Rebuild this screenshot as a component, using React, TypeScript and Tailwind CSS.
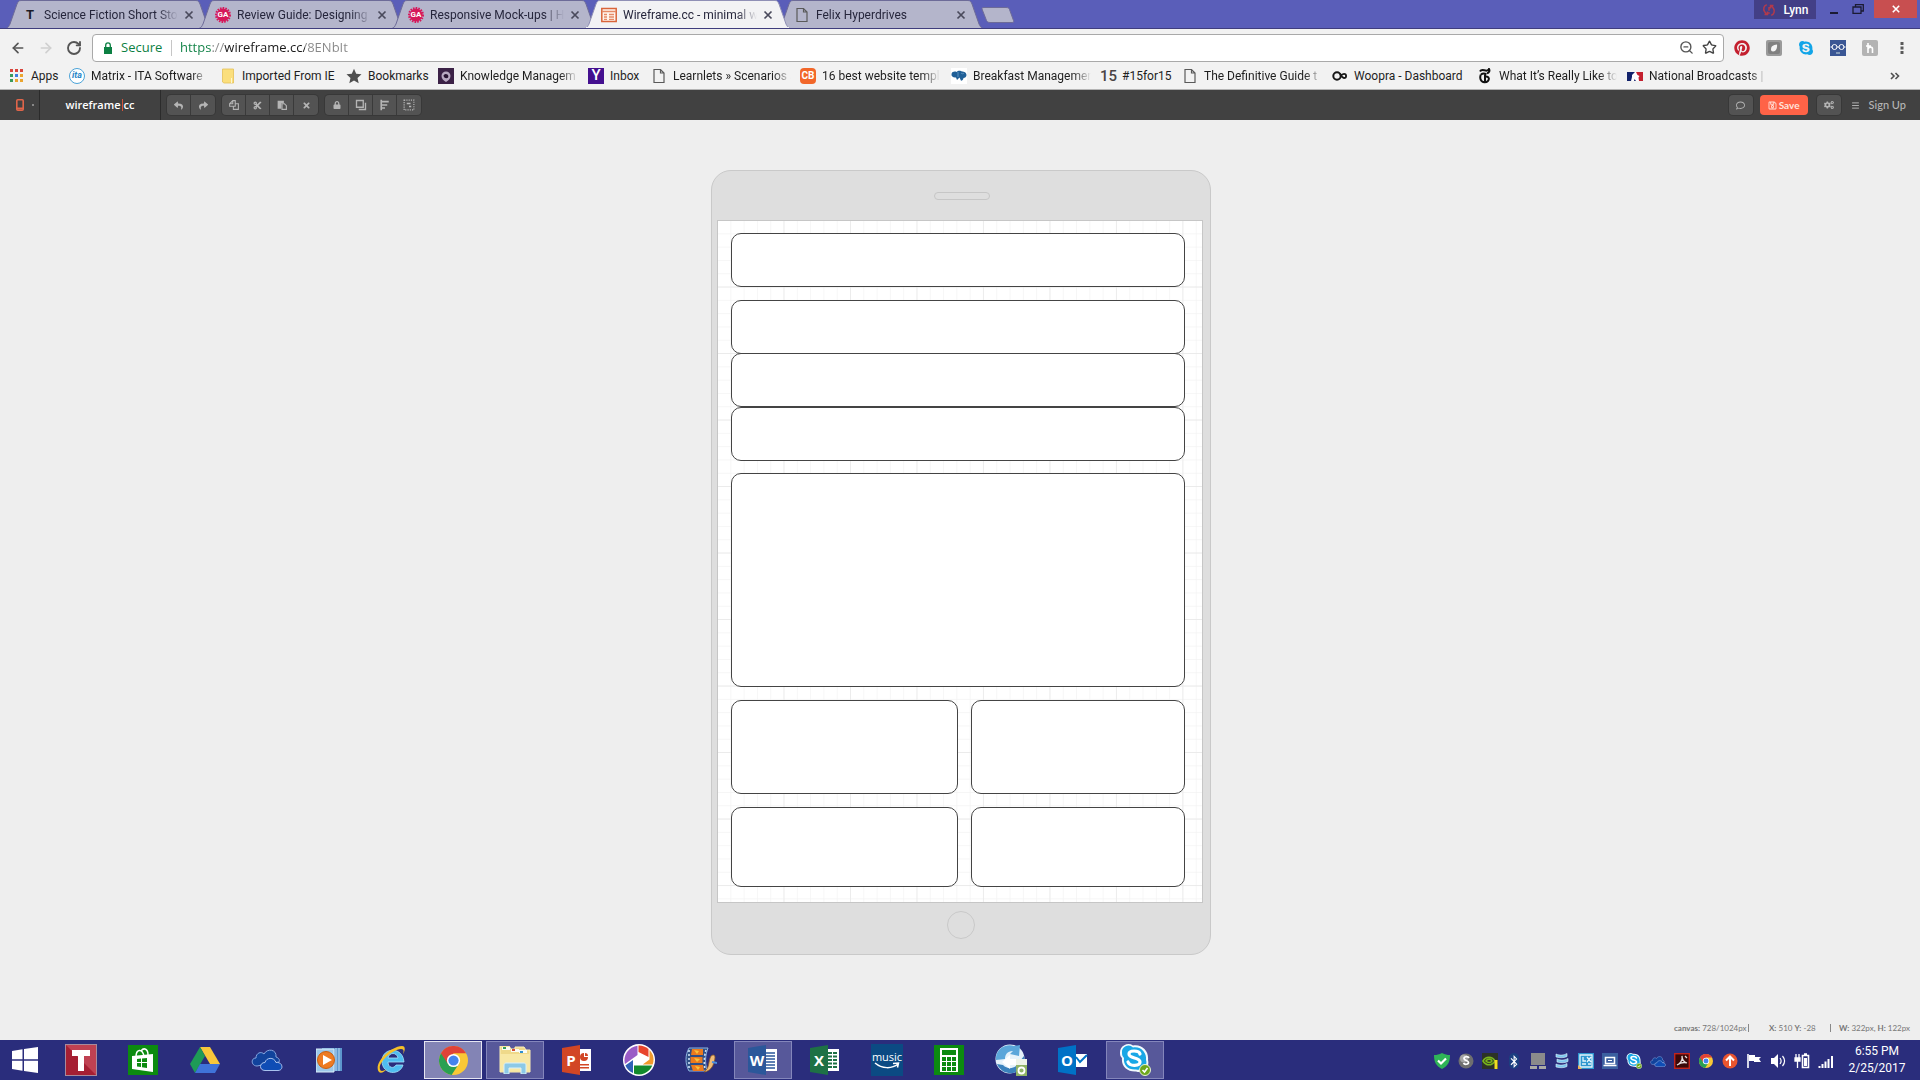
import React from "react";
import { ZoomOut, Star, ArrowLeft, ArrowRight, RotateCw, Menu } from "lucide-react";
import {
  FaReply, FaShare, FaCut, FaTimes, FaLock, FaCogs, FaRegComment, FaRegSave, FaBluetoothB, FaPinterest, FaSkype,
} from "react-icons/fa";

type Kids = { children: React.ReactNode };

function Svg({ children, box = "0 0 16 16", className = "size-4" }: Kids & { box?: string; className?: string }) {
  return (
    <svg viewBox={box} className={`shrink-0 ${className}`} aria-hidden="true">
      {children}
    </svg>
  );
}

/* ---------- favicons ---------- */

const PageIcon = () => (
  <Svg>
    <path d="M3 1.500h6.500L13 5v9.500H3zM9.500 1.500V5H13" fill="none" stroke="#5a5a5a" strokeWidth="1.200" />
  </Svg>
);
const LetterT = () => <span className="w-4 shrink-0 text-center text-[13px] font-bold leading-4 text-[#1c1c28]">T</span>;
const GaIcon = () => (
  <span className="relative flex size-4 shrink-0 items-center justify-center text-[8px] font-bold leading-none text-white">
    <svg viewBox="0 0 16 16" className="absolute inset-0 size-full" aria-hidden="true">
      <circle cx="8" cy="8" r="6.500" fill="#d6185a" />
      <circle cx="8" cy="8" r="7" fill="none" stroke="#d6185a" strokeWidth="2" strokeDasharray="1.600 1.100" />
    </svg>
    <span className="relative">GA</span>
  </span>
);
const WireIcon = () => (
  <Svg>
    <path d="M.8 1.500h14.400v13H.8z" fill="#fff4ee" stroke="#d9643a" strokeWidth="1.500" />
    <path d="M1 4.500h14M3 7.500h3M8 7.500h5M3 10h3M8 10h5M3 12.300h3M8 12.300h5" stroke="#e58a68" strokeWidth="1.300" />
  </Svg>
);
const AppsIcon = () => (
  <Svg>
    {["#d8453c", "#d8453c", "#d8453c", "#3a9a5b", "#3f7de0", "#eba52f", "#3a9a5b", "#eba52f", "#eba52f"].map((c, i) => (
      <rect key={i} x={1 + (i % 3) * 5} y={1 + Math.floor(i / 3) * 5} width="3" height="3" fill={c} />
    ))}
  </Svg>
);
const ItaIcon = () => (
  <span className="flex size-4 shrink-0 items-center justify-center rounded-full border border-[#4ba3d8] bg-white text-[9px] font-bold italic leading-none text-[#2a86c8]">
    ita
  </span>
);
const FolderIcon = () => (
  <Svg>
    <path d="M2.500 1h11v14H4l-1.500-1z" fill="#fbdf7c" stroke="#e4c058" strokeWidth=".8" />
    <path d="M11.500 10v5" stroke="#fff6cf" />
  </Svg>
);
const StarIcon = () => (
  <Svg>
    <path d="M8 .8l2.200 4.900 5.300.6-4 3.600 1.200 5.300L8 12.500l-4.700 2.700 1.200-5.300-4-3.600 5.300-.6z" fill="#4f4f4f" />
  </Svg>
);
const KmIcon = () => (
  <Svg>
    <rect width="16" height="16" fill="#3b2146" />
    <path d="M3.500 8a4.500 4.500 0 1 1 9 0c0 2.500-2 4.500-4.500 6-2.500-1.500-4.500-3.500-4.500-6z" fill="#b9a9c2" />
    <path d="M5.500 7.500a2.500 2.500 0 1 1 4.500 2.200C8 11 5.500 9.500 5.500 7.500z" fill="#2a1433" />
  </Svg>
);
const YahooIcon = () => (
  <span className="flex size-4 shrink-0 items-center justify-center bg-[#44108f] text-[15px] font-medium leading-none text-white">Y</span>
);
const CbIcon = () => (
  <span className="flex size-4 shrink-0 items-center justify-center rounded-sm bg-[#f2672a] text-[10px] font-bold leading-none text-white">CB</span>
);
const BrainIcon = () => (
  <Svg>
    <rect width="16" height="16" fill="#fff" />
    <path d="M.5 6C1 3.500 4 3 5.500 4 7 2 10 2.500 11 3.500c2 0 4.500 1 4.500 3.500 0 2-1.500 2.800-3 3-.5 2-1 2.500-2.500 2.800L8.500 9.500 6 12 5 9.500C2.500 10 0 8.500.5 6z" fill="#1f5f97" />
    <path d="M7 4v5M10 5c1 1 2 1 3 0" stroke="#5b93c0" fill="none" />
  </Svg>
);
const FifteenIcon = () => <span className="w-4 shrink-0 text-center text-[15px] font-medium leading-4 text-[#4a4444]">15</span>;
const WoopraIcon = () => (
  <Svg>
    <circle cx="5" cy="8" r="3.700" fill="none" stroke="#161616" strokeWidth="2" />
    <path d="M8 5.500c1 2 2 4.500 4 4.500a2 2 0 1 0 0-4.200c-1.700 0-2.500 1.200-3.300 2.700" fill="none" stroke="#161616" strokeWidth="1.800" />
  </Svg>
);
const NytIcon = () => (
  <Svg>
    <path d="M3 3.500C4.500.5 7.500 3 10 2.600c1.200-.2 1.800-.8 2-1.600 1 1.800.2 3.700-2 4.200M4 6.500c2-1.500 3.500-1 5.500-.5M3.800 6.500C2.500 10 3.500 14 7.500 14.200c3 .1 4.700-2 4.300-4-.4-1.700-2.500-2-3.800-1M8 5v9" fill="none" stroke="#111" strokeWidth="2" />
  </Svg>
);
const MlbIcon = () => (
  <Svg>
    <rect y="4" width="16" height="9" fill="#fff" />
    <path d="M0 4h8L5 7v2l-1 4H0z" fill="#12226b" />
    <path d="M9 4h7v9h-4l-.5-3.500 1-1.500L10.500 7z" fill="#c4202f" />
    <path d="M7 13l.5-2 1.500 2z" fill="#12226b" />
  </Svg>
);

/* ---------- browser chrome ---------- */

const tabs = [
  { title: "Science Fiction Short Sto", icon: <LetterT /> },
  { title: "Review Guide: Designing", icon: <GaIcon /> },
  { title: "Responsive Mock-ups | H", icon: <GaIcon /> },
  { title: "Wireframe.cc - minimal w", icon: <WireIcon />, active: true },
  { title: "Felix Hyperdrives", icon: <PageIcon /> },
];

const fade = "overflow-hidden whitespace-nowrap [mask-image:linear-gradient(to_right,#000_85%,transparent)]";

function TabStrip() {
  return (
    <header className="flex h-7 items-start justify-between bg-[#5a5eb9] font-['Roboto',sans-serif]">
      <div role="tablist" className="flex pl-1.5">
        {tabs.map((t) => (
          <div key={t.title} className={`relative -mr-3 h-7 w-[205px] ${t.active ? "z-10" : ""}`}>
            <svg viewBox="0 0 205 28" preserveAspectRatio="none" className="absolute inset-0 size-full" aria-hidden="true">
              <path d="M0 28.500C2 28 3 26 4 24L11 4c1-2 1.500-3.500 4-3.500h175c2.500 0 3 1.500 4 3.500l7 20c1 2 2 4 4 4.500z" fill={t.active ? "#f2f2f4" : "#b4b5cb"} stroke={t.active ? "#8f8fb5" : "#6d6b98"} />
              {t.active && <path d="M1 28h203" stroke="#f2f2f4" strokeWidth="2" />}
            </svg>
            <div className="relative flex h-7 items-center pl-4 pt-0.5">
              {t.icon}
              <button role="tab" aria-selected={!!t.active} className={`ml-1.5 w-[134px] text-left text-[12px] leading-4 text-[#26263c] ${fade}`}>
                {t.title}
              </button>
              <button aria-label="Close tab" className="ml-1.5">
                <Svg box="0 0 10 10" className="size-2.5">
                  <path d="M1.500 1.500l7 7m0-7l-7 7" stroke="#4a4a5c" strokeWidth="1.700" />
                </Svg>
              </button>
            </div>
          </div>
        ))}
        <button aria-label="New tab" className="ml-2.5 mt-[7px] self-start">
          <Svg box="0 0 34 16" className="h-4 w-[34px]">
            <path d="M3 .5h22c2 0 3 .5 3.500 2l4 11c.5 1.500 0 2-1.500 2H9c-2 0-3-1-3.500-2L1 2C.7 1 1.500.5 3 .5z" fill="#b4b5cb" stroke="#6d6b98" />
          </Svg>
        </button>
      </div>
      <div className="flex items-start pr-[3px]">
        <button className="flex h-[19px] w-[62px] items-center justify-center gap-2 bg-[#433f86] text-[12px] font-medium leading-none text-white">
          <Svg className="h-3 w-3.5">
            <path d="M5 1C1 2 0 7 2 10l3 4M2 14h4v-4M11 15c4-1 5-6 3-9l-3-4M14 2h-4v4M8 4v5M8 11v2" stroke="#b23a4b" strokeWidth="2" fill="none" />
          </Svg>
          Lynn
        </button>
        <button aria-label="Minimize" className="flex h-[18px] w-9 items-center justify-center pt-2">
          <span className="h-0.5 w-2 bg-[#1b1b33]" />
        </button>
        <button aria-label="Restore" className="flex h-[18px] w-[22px] items-center">
          <Svg box="0 0 12 10" className="h-2.5 w-3">
            <path d="M1 3h8v6.500H1zM3.500 3V.7h7.800V7H9" fill="none" stroke="#1b1b33" strokeWidth="1.300" />
          </Svg>
        </button>
        <button aria-label="Close window" className="flex h-[18px] w-[43px] items-center justify-center bg-[#c84f50]">
          <Svg box="0 0 10 10" className="size-2">
            <path d="M1 1l8 8M9 1L1 9" stroke="#fff" strokeWidth="2" />
          </Svg>
        </button>
      </div>
    </header>
  );
}

function AddressBar() {
  return (
    <div className="flex h-[34px] items-center border-t border-[#3f3d7d] bg-[#f2f2f2] pr-2.5 pt-1">
      <div className="flex w-[92px] items-center gap-3 pl-2.5">
        <button aria-label="Back"><ArrowLeft size={16} strokeWidth={2.500} color="#555" /></button>
        <button aria-label="Forward"><ArrowRight size={16} strokeWidth={2.500} color="#d0d0d0" /></button>
        <button aria-label="Reload"><RotateCw size={16} strokeWidth={2.800} color="#555" /></button>
      </div>
      <form className="flex h-7 flex-1 items-center rounded-sm border border-[#a9a9a9] bg-white pl-2.5 pr-1.5">
        <Svg box="0 0 10 12" className="h-3 w-2.5">
          <path d="M1 5h8v7H1z" fill="#0c8043" />
          <path d="M2.700 5V3.200a2.300 2.300 0 0 1 4.600 0V5" fill="none" stroke="#0c8043" strokeWidth="1.300" />
        </Svg>
        <label htmlFor="url" className="ml-2 w-[50px] text-[13px] text-[#0c8043]">Secure</label>
        <span className="mr-2 h-4 w-px bg-[#c6c6c6]" />
        <input
          id="url"
          defaultValue="https://wireframe.cc/8ENbIt"
          className="min-w-0 flex-1 bg-[linear-gradient(to_right,#0c8043_0,#0c8043_32px,#888_32px,#888_44px,#1a1a1a_44px,#1a1a1a_125px,#888_125px)] bg-clip-text text-[13px] text-transparent outline-none"
        />
        <button type="button" aria-label="Zoom out"><ZoomOut size={15} color="#555" strokeWidth={2.200} /></button>
        <button type="button" aria-label="Bookmark" className="ml-2"><Star size={15} color="#444" strokeWidth={2.200} /></button>
      </form>
      <div className="ml-2.5 flex items-center gap-4">
        <button aria-label="Pinterest"><FaPinterest size={16} color="#c4202f" /></button>
        <button aria-label="Evernote">
          <Svg>
            <rect width="16" height="16" rx="2" fill="#9a9a9a" />
            <rect x="2" y="2" width="12" height="12" rx="2" fill="#808080" />
            <path d="M5 9.500C5 6 7 5 11 4.500c.5 3.500-1 7-4 7-1.300 0-2-.7-2-2z" fill="#f4f4f4" />
          </Svg>
        </button>
        <button aria-label="Skype"><FaSkype size={16} color="#12a5e8" /></button>
        <button aria-label="Glasses">
          <Svg>
            <rect width="16" height="16" fill="#3a5694" />
            <path d="M.5 7h2M13.500 7h2M7 7h2" stroke="#fff" />
            <circle cx="4.500" cy="7" r="2.500" fill="none" stroke="#fff" />
            <circle cx="11.500" cy="7" r="2.500" fill="none" stroke="#fff" />
            <path d="M6 13h4" stroke="#cdd" />
          </Svg>
        </button>
        <button aria-label="Honey">
          <Svg>
            <rect width="16" height="16" rx="2" fill="#b3b3b3" />
            <path d="M6 3v10M4 6h5M6 9c1-2.500 4.500-2.500 4.500 0V13" fill="none" stroke="#fff" strokeWidth="1.600" />
          </Svg>
        </button>
        <button aria-label="Browser menu">
          <Svg>
            <path d="M6.500 2h3v3h-3zM6.500 6.500h3v3h-3zM6.500 11h3v3h-3z" fill="#5a5a5a" />
          </Svg>
        </button>
      </div>
    </div>
  );
}

const bookmarks = [
  { text: "Apps", icon: <AppsIcon />, w: "w-[60px]" },
  { text: "Matrix - ITA Software", icon: <ItaIcon />, w: "w-[151px]", cut: true },
  { text: "Imported From IE", icon: <FolderIcon />, w: "w-[126px]" },
  { text: "Bookmarks", icon: <StarIcon />, w: "w-[92px]" },
  { text: "Knowledge Managem", icon: <KmIcon />, w: "w-[150px]", cut: true },
  { text: "Inbox", icon: <YahooIcon />, w: "w-[63px]" },
  { text: "Learnlets » Scenarios a", icon: <PageIcon />, w: "w-[149px]", cut: true },
  { text: "16 best website templ", icon: <CbIcon />, w: "w-[151px]", cut: true },
  { text: "Breakfast Managemen", icon: <BrainIcon />, w: "w-[149px]", cut: true },
  { text: "#15for15", icon: <FifteenIcon />, w: "w-[82px]" },
  { text: "The Definitive Guide t", icon: <PageIcon />, w: "w-[150px]", cut: true },
  { text: "Woopra - Dashboard", icon: <WoopraIcon />, w: "w-[145px]" },
  { text: "What It’s Really Like to", icon: <NytIcon />, w: "w-[150px]", cut: true },
  { text: "National Broadcasts |", icon: <MlbIcon />, w: "w-[150px]", cut: true },
];

function BookmarksBar() {
  return (
    <nav className="flex h-7 items-center border-b border-[#b4b4b4] bg-[#f2f2f2] pl-[9px] pr-5 font-['Roboto',sans-serif] text-[12px] text-[#1e1e1e]">
      {bookmarks.map((b) => (
        <a key={b.text} href="#" className={`flex items-center gap-1.5 leading-4 ${b.w}`}>
          {b.icon}
          <span className={b.cut ? `w-[118px] ${fade}` : "whitespace-nowrap"}>{b.text}</span>
        </a>
      ))}
      <button aria-label="More bookmarks" className="ml-auto">
        <Svg box="0 0 10 8" className="h-2 w-2.5">
          <path d="M1 1l3 3-3 3M5.500 1l3 3-3 3" fill="none" stroke="#505050" strokeWidth="1.600" />
        </Svg>
      </button>
    </nav>
  );
}

/* ---------- editor toolbar ---------- */

const CopyIcon = () => (
  <Svg className="size-2.5"><path d="M6 1h4v9H1V6zM6 1v5H1M10 6h5v9H7v-5" fill="none" stroke="#b5b5b5" strokeWidth="1.700" /></Svg>
);
const PasteIcon = () => (
  <Svg className="size-2.5">
    <path d="M1 1h10v4H7v9H1z" fill="#b5b5b5" />
    <path d="M8 6h4l3 3v6H8z" fill="none" stroke="#b5b5b5" strokeWidth="1.800" />
  </Svg>
);
const LayersIcon = () => (
  <Svg className="size-3"><path d="M2 2h9v9H2zM5 14h9V5" fill="none" stroke="#b5b5b5" strokeWidth="1.800" /></Svg>
);
const AlignIcon = () => (
  <Svg className="size-3"><path d="M3 1v14M3 3.500h10M3 8h8M3 12h5" fill="none" stroke="#b5b5b5" strokeWidth="2.200" /></Svg>
);
const SelectIcon = () => (
  <Svg className="size-3">
    <path d="M1.500 1.500h13v13h-13z" fill="none" stroke="#b5b5b5" strokeWidth="1.600" strokeDasharray="1.500 1.500" />
    <path d="M5 6h5M8 10h3" stroke="#b5b5b5" strokeWidth="2" fill="none" />
  </Svg>
);

const groups = [
  [["Undo", <FaReply size={9} />], ["Redo", <FaShare size={9} />]],
  [["Copy", <CopyIcon />], ["Cut", <FaCut size={9} />], ["Paste", <PasteIcon />], ["Delete", <FaTimes size={9} />]],
  [["Lock", <FaLock size={8} />], ["Arrange", <LayersIcon />], ["Align", <AlignIcon />], ["Select", <SelectIcon />]],
] as [string, React.ReactNode][][];

function EditorBar() {
  return (
    <div className="flex h-[30px] items-stretch bg-[#414141] font-['Lato',sans-serif] text-[#b5b5b5]">
      <button aria-label="Device" className="flex w-10 items-center gap-2 border-r border-[#2b2b2b] pl-4">
        <Svg box="0 0 8 12" className="h-3 w-2">
          <rect x=".8" y=".8" width="6.400" height="10.400" rx="1" fill="none" stroke="#e0654a" strokeWidth="1.600" />
          <path d="M1 9.500h6" stroke="#e0654a" strokeWidth="2" />
        </Svg>
        <span className="size-0.5 bg-[#888]" />
      </button>
      <a href="#" className="flex w-[121px] items-center justify-center border-r border-[#2b2b2b] font-['Open_Sans',sans-serif] text-[11px] font-semibold text-white">
        wireframe<span className="mx-px h-3 w-px bg-[#d4543c]" />cc
      </a>
      <div className="flex items-center gap-[7px] pl-1.5">
        {groups.map((g, i) => (
          <div key={i} className="flex h-5 divide-x divide-[#3a3a3a] rounded-sm bg-[#535353] ring-1 ring-[#383838]">
            {g.map(([label, icon]) => (
              <button key={label} aria-label={label} className="flex w-6 items-center justify-center">{icon}</button>
            ))}
          </div>
        ))}
      </div>
      <div className="ml-auto flex items-center pr-3.5">
        <button aria-label="Comments" className="flex h-5 w-6 items-center justify-center rounded-sm bg-[#535353] ring-1 ring-[#383838]"><FaRegComment size={9} /></button>
        <button className="ml-[7px] flex h-5 w-12 items-center justify-center gap-0.5 rounded-sm bg-[#ff6347] text-[10px] font-bold text-[#ffe3dc]"><FaRegSave size={9} />Save</button>
        <button aria-label="Settings" className="ml-[9px] flex h-5 w-6 items-center justify-center rounded-sm bg-[#535353] ring-1 ring-[#383838]"><FaCogs size={10} /></button>
        <button aria-label="Menu" className="ml-2.5"><Menu size={9} strokeWidth={2.500} /></button>
        <a href="#" className="ml-[9px] text-[11px] font-medium">Sign Up</a>
      </div>
    </div>
  );
}

/* ---------- canvas ---------- */

function Grid() {
  return (
    <svg viewBox="0 0 728 1024" preserveAspectRatio="none" className="absolute inset-0 size-full" aria-hidden="true">
      <defs>
        <pattern id="minor" width="20" height="20" patternUnits="userSpaceOnUse">
          <path d="M20 0v20H0" fill="none" stroke="#f3f3f3" strokeWidth="2" />
        </pattern>
        <pattern id="major" width="100" height="100" patternUnits="userSpaceOnUse">
          <path d="M100 0v100H0" fill="none" stroke="#e8e8e8" strokeWidth="2" />
        </pattern>
      </defs>
      <rect width="728" height="1024" fill="url(#minor)" />
      <rect width="728" height="1024" fill="url(#major)" />
    </svg>
  );
}

const box = "rounded-[10px] border border-[#444] bg-white";

function Device() {
  return (
    <div className="flex w-[500px] flex-col rounded-[20px] border border-[#c9c9c9] bg-[#dedede] px-[5px]">
      <div className="flex h-[49px] items-center justify-center pl-0.5">
        <span className="h-2 w-14 rounded-full border border-[#c6c6c6]" />
      </div>
      <div className="relative mr-0.5 border border-[#c6c6c6] bg-white pb-[15px] pl-[13px] pr-[17px] pt-3">
        <Grid />
        <div className="relative flex flex-col">
          <div className={`h-[54px] ${box}`} />
          <div className={`mt-[13px] h-[54px] ${box}`} />
          <div className={`-mt-px h-[54px] ${box}`} />
          <div className={`h-[54px] ${box}`} />
          <div className={`mt-3 h-[214px] ${box}`} />
          <div className="mt-[13px] grid grid-cols-[227fr_214fr] gap-[13px]">
            <div className={`h-[94px] ${box}`} />
            <div className={`h-[94px] ${box}`} />
            <div className={`h-20 ${box}`} />
            <div className={`h-20 ${box}`} />
          </div>
        </div>
      </div>
      <div className="flex h-[51px] items-start justify-center pt-2">
        <span className="size-7 rounded-full border border-[#c9c9c9]" />
      </div>
    </div>
  );
}

/* ---------- taskbar icons ---------- */

const StartIcon = () => (
  <Svg box="0 0 26 26" className="size-[26px]">
    <path d="M0 4l10.500-1.700v10H0zM12 2l14-2v12.300H12zM0 13.700h10.500v10L0 22zM12 13.700h14V26l-14-2z" fill="#fff" />
  </Svg>
);
const TIcon = () => (
  <Svg box="0 0 32 32" className="size-8">
    <rect x=".5" y=".5" width="31" height="31" fill="#a51f33" stroke="#a88a9c" />
    <path d="M1 1h30v30z" fill="#bf4152" />
    <path d="M7 6h18v6h-6v15h-6V12H7z" fill="#fff" />
  </Svg>
);
const StoreIcon = () => (
  <Svg box="0 0 30 30" className="size-[30px]">
    <rect width="30" height="30" fill="#0c8a10" />
    <path d="M4 11l21-2v18L4 24z" fill="#fff" />
    <path d="M8 12c0-8 6-9 8-1M13 6c3-4 7-2 7 4" fill="none" stroke="#fff" strokeWidth="1.500" />
    <path d="M9 14l4-.5V17H9zM14 13.500l5-.5v4h-5zM9 18h4v4l-4-.5zM14 18h5v5l-5-.7z" fill="#0c8a10" />
  </Svg>
);
const DriveIcon = () => (
  <Svg box="0 0 30 26" className="h-[26px] w-[30px]">
    <path d="M10 0h10l10 17H20z" fill="#f8c73a" />
    <path d="M10 0l5 9L5 26 0 17z" fill="#1e9b56" />
    <path d="M10 17h20l-5 9H5z" fill="#3f73d9" />
  </Svg>
);
const CloudIcon = ({ className }: { className: string }) => (
  <Svg box="0 0 32 22" className={className}>
    <path d="M6 17C0 17-.5 9 5 9c0-5 5-7 8-4 3-6 13-5 12 3 3 1 4 3 3 5z" fill="#11439c" stroke="#86a6e0" />
    <path d="M14 21.500c-6 0-6-8 0-8 1-5 9-6 11 0 7-1 8 8 2 8z" fill="#0f4db5" stroke="#a9c2ee" />
  </Svg>
);
const WmpIcon = () => (
  <Svg box="0 0 26 26" className="size-[26px]">
    <path d="M6 1h20v23H6z" fill="#5d97cd" />
    <path d="M20 1v23M23 1v23" stroke="#bcdcf5" />
    <path d="M0 2h18v23H0z" fill="#9cc8ea" stroke="#dbeefa" />
    <circle cx="10" cy="13" r="8.500" fill="#ee7b22" stroke="#c95f10" />
    <path d="M7 8l9 5-9 5z" fill="#fff" />
  </Svg>
);
const IeIcon = () => (
  <Svg box="0 0 30 30" className="size-[30px]">
    <path d="M27 20c-3 11-21 10-21-4C6 2 27 1 28 17H12c0 6 6 7 8 3zM12 13h10c-1-6-9-6-10 0z" fill="#4fbdf0" stroke="#a4e1fb" strokeWidth=".8" />
    <path d="M3 27C-3 20 12 2 26 1c4 0 3 5 1 8 1-3 1-5-2-5C15 5 2 18 4 24c0 3 4 2 7 0-3 3-6 5-8 3z" fill="#f5c028" />
  </Svg>
);
const ChromeIcon = ({ className }: { className: string }) => (
  <Svg box="0 0 30 30" className={className}>
    <circle cx="15" cy="15" r="15" fill="#f9c836" />
    <path d="M15 15L2 7.500A15 15 0 0 0 13 29.900L21.500 17z" fill="#2aa052" />
    <path d="M2 7.500A15 15 0 0 1 28 7.500H15L9 18z" fill="#df4237" />
    <circle cx="15" cy="15" r="6.800" fill="#fff" />
    <circle cx="15" cy="15" r="5.300" fill="#4483ee" />
  </Svg>
);
const ExplorerIcon = () => (
  <Svg box="0 0 32 28" className="h-7 w-8">
    <path d="M1 3V0h9l2 3h4V1h9l2 3h4v22H1z" fill="#efd98a" stroke="#fff0b8" />
    <path d="M3 1h8v3H3zM12 3h8v3h-8zM20 4h8v3h-8z" fill="#f9fbf5" />
    <path d="M4 1h3v2H4z" fill="#379b5a" />
    <path d="M13 3h3v2h-3z" fill="#d8502f" />
    <path d="M21 5h3v2h-3z" fill="#2f8fd0" />
    <path d="M1 8h30v17H1z" fill="#f8e8a5" />
    <path d="M5 28v-9c0-1 1-2 2-2h18c1 0 2 1 2 2v9h-5v-6H10v6z" fill="#8cc9e6" stroke="#d8f1fb" />
  </Svg>
);
function Office({ letter, color, children }: Kids & { letter: string; color: string }) {
  return (
    <span className="relative block size-[30px]">
      <Svg box="0 0 30 30" className="size-[30px]">
        <path d="M17 4h12v22H17z" fill="#fff" />
        {children}
        <path d="M0 3l18-3v30L0 27z" fill={color} />
      </Svg>
      <span className="absolute inset-y-0 left-0 flex w-[18px] items-center justify-center text-[15px] font-bold leading-none text-white">{letter}</span>
    </span>
  );
}
const PicasaIcon = () => (
  <Svg box="0 0 32 32" className="size-8">
    <circle cx="16" cy="16" r="16" fill="#fff" />
    <path d="M14.500 1.800A14.500 14.500 0 0 0 2 20L14.500 11z" fill="#9a5cc6" />
    <path d="M15.500 1.600a14.500 14.500 0 0 1 10 3.500V13L15.500 8z" fill="#e8452c" />
    <path d="M26.500 6a14.500 14.500 0 0 1 3.200 14.500h-10l6.800-5z" fill="#f09a2c" />
    <path d="M29.300 21.500A14.500 14.500 0 0 1 11 29.500v-8z" fill="#128a2c" />
    <path d="M2.400 21.500l7.600-5.500v13A14.500 14.500 0 0 1 2.400 21.500z" fill="#2f62b5" />
  </Svg>
);
const MovieIcon = () => (
  <Svg box="0 0 32 26" className="h-[26px] w-8">
    <path d="M4 1h19c-3 8-3 14-1 23H4C0 17 0 8 4 1z" fill="#2f4f86" stroke="#8fb4e0" />
    <path d="M7 2h11v6H6zM5.500 10h12v6h-12zM6 18h12l1 6H8z" fill="#ec7a1e" />
    <path d="M9 3l5 1-2 3zM9 11l6 1-3 3zM10 19l5 1-2 3z" fill="#f7c23c" />
    <path d="M4 3v20M21 3c-2 6-2 14-1 20" stroke="#cfe0f5" strokeWidth="1.600" strokeDasharray="2 2" fill="none" />
    <path d="M26 9c4-3 5 1 3 6-1 5-4 9-10 10 6-4 4-11 7-16z" fill="#f0bc78" stroke="#8f5a24" strokeWidth=".8" />
    <path d="M27 15l5 1" stroke="#4c8fe0" strokeWidth="2" fill="none" />
  </Svg>
);
const MusicIcon = () => (
  <span className="flex size-8 flex-col items-center justify-center bg-[#0b4a83] text-[11px] leading-[11px] text-white">
    music
    <Svg box="0 0 26 7" className="h-[7px] w-[26px]">
      <path d="M1 1c7 6 17 6 23 1M19 1.500l5.500-.5-1 4.500" fill="none" stroke="#fff" strokeWidth="1.500" />
    </Svg>
  </span>
);
const CalcIcon = () => (
  <Svg box="0 0 30 30" className="size-[30px]">
    <rect width="30" height="30" fill="#0c8a10" />
    <path d="M6 3h18v24H6z" fill="#fff" />
    <path d="M8 5h14v5H8z" fill="#0c8a10" />
    {[0, 1, 2].map((r) => [0, 1, 2].map((c) => <rect key={`${r}${c}`} x={8 + c * 5} y={12 + r * 5} width="4" height="4" fill="#0c8a10" />))}
  </Svg>
);
const SyncIcon = () => (
  <Svg box="0 0 32 32" className="size-8">
    <circle cx="15" cy="15" r="14.500" fill="#e6f2fa" />
    <path d="M1 16C0 5 11-1 19 2l6-1-1 11-9-2 3-3c-6 0-8 4-8 8z" fill="#5ba6da" />
    <path d="M29 12c2 8-3 16-11 17-6 1-13-2-16-9l6 1c4 4 9 4 13 1z" fill="#3b82bd" />
    <path d="M7 18l8-7v4h8v6h-8v4z" fill="#fff" />
    <path d="M21 15h11v17H21z" fill="#8fb266" />
    <path d="M21 15h11v6H21z" fill="#eef3e8" />
    <circle cx="26.500" cy="26.500" r="3" fill="none" stroke="#fff" strokeWidth="1.800" />
  </Svg>
);
const SkypeIcon = ({ className }: { className: string }) => (
  <Svg box="0 0 32 32" className={className}>
    <path d="M1 9a8.500 8.500 0 0 1 13-7.500C23 0 30 7 29 16c2 7-4 14-12 11.500C8 28 2 22 3 14 1.500 13 1 11 1 9z" fill="#f2fafe" />
    <path d="M3 9a6.500 6.500 0 0 1 11-5.500C22 2 28 9 27 16c2 5-3 11-10 9.500C9 26 4 21 5 14 3.500 12.500 3 11 3 9z" fill="#19a7e6" />
    <path d="M21 10c-1-4-11-4-11 0 0 5 11 3 11 8 0 4-10 5-12 0" fill="none" stroke="#fff" strokeWidth="3.200" strokeLinecap="round" />
    <circle cx="26" cy="26" r="5.500" fill="#6ea71d" stroke="#e3f0d0" />
    <path d="M23.500 26l2 2 3-4" stroke="#fff" strokeWidth="1.600" fill="none" />
  </Svg>
);

const apps: { name: string; icon: React.ReactNode; state?: "open" | "front" }[] = [
  { name: "T", icon: <TIcon /> },
  { name: "Store", icon: <StoreIcon /> },
  { name: "Drive", icon: <DriveIcon /> },
  { name: "OneDrive", icon: <CloudIcon className="h-[22px] w-8" /> },
  { name: "Media Player", icon: <WmpIcon /> },
  { name: "Internet Explorer", icon: <IeIcon /> },
  { name: "Chrome", icon: <ChromeIcon className="size-[29px]" />, state: "front" },
  { name: "File Explorer", icon: <ExplorerIcon />, state: "open" },
  {
    name: "PowerPoint",
    icon: (
      <Office letter="P" color="#d24625">
        <circle cx="22" cy="12" r="4" fill="#d24625" />
        <path d="M22 12V7h5v5z" fill="#fff" />
        <path d="M23 11V8a3 3 0 0 1 3 3zM18 19h9v1.500h-9zM18 22h9v1.500h-9z" fill="#d24625" />
      </Office>
    ),
  },
  { name: "Picasa", icon: <PicasaIcon /> },
  { name: "Movie Maker", icon: <MovieIcon /> },
  {
    name: "Word",
    icon: (
      <Office letter="W" color="#2b579a">
        <path d="M18 8h9M18 11h9M18 14h9M18 17h9M18 20h9M18 23h9" stroke="#2b579a" strokeWidth="1.300" />
      </Office>
    ),
    state: "open",
  },
  {
    name: "Excel",
    icon: (
      <Office letter="X" color="#1e7145">
        <path d="M18 8h9M18 11.500h9M18 15h9M18 18.500h9M18 22h9" stroke="#1e7145" strokeWidth="2" />
        <path d="M22.500 6v18" stroke="#fff" />
      </Office>
    ),
  },
  { name: "Amazon Music", icon: <MusicIcon /> },
  { name: "Calculator", icon: <CalcIcon /> },
  { name: "Sync", icon: <SyncIcon /> },
  {
    name: "Outlook",
    icon: (
      <Office letter="O" color="#0072c6">
        <path d="M17 4h12v5H17zM17 22h12v4H17z" fill="#2a2d7c" />
        <path d="M18 12l4 5 7-7" stroke="#0072c6" strokeWidth="2" fill="none" />
      </Office>
    ),
  },
  { name: "Skype", icon: <SkypeIcon className="size-8" />, state: "open" },
];

const tray: [string, React.ReactNode][] = [
  ["Security", <Svg><path d="M0 2c3 0 5-.5 8-2 3 1.500 5 2 8 2 0 7-2 11-8 14C2 13 0 9 0 2z" fill="#2fb457" /><path d="M4 7.500l3 3 5-5" stroke="#fff" strokeWidth="2.200" fill="none" /></Svg>],
  ["Sound manager", <Svg><circle cx="8" cy="8" r="7.500" fill="#6f6f6f" /><circle cx="6" cy="5.500" r="4" fill="#a5a5a5" /><path d="M11 5c-1-2-5-1.500-5 .5 0 2.500 4.500 1.500 4.500 4 0 2-4 2.500-5 .5" stroke="#fff" strokeWidth="1.700" fill="none" /></Svg>],
  ["Graphics", <Svg><rect width="16" height="16" fill="#2c3327" /><path d="M1 8c3-5 9-5 12 0-3 5-9 5-12 0zM4 8c1.500-2.500 5-2.500 6 0-1 2-4.500 2-6 0z" fill="none" stroke="#79b51c" strokeWidth="1.600" /><path d="M12.500 7h3v9h-3z" fill="#f3dd23" /></Svg>],
  ["Bluetooth", <span className="flex h-4 w-2.5 items-center justify-center rounded-full bg-[#1c3f80]"><FaBluetoothB size={13} color="#fff" /></span>],
  ["Display", <Svg><path d="M1 0h14v12H1z" fill="#8b8b8b" /><path d="M0 13h7v3H0zM9 13h7v3H9z" fill="#aaaaa5" /></Svg>],
  ["Database", <Svg><path d="M2 1c4 2 8 1 11-.5v3C10 5 6 5 2 4zM3 6c4 2 8 1 11-.5v3C11 10 7 10 3 9zM2 11c4 2 8 1 11-.5v3C10 15 6 15 2 14z" fill="#7cc7ee" stroke="#e3f4fc" strokeWidth=".6" /></Svg>],
  ["Display driver", <Svg><rect width="16" height="16" fill="#2e96cf" /><path d="M2 2h12v12H2zM5 4v4h3M9 4l4 5M13 4L9 9M4 11h4M10 11h3" fill="none" stroke="#e4f5fc" strokeWidth="1.300" /><path d="M0 12l4 4H0z" fill="#f0b054" /></Svg>],
  ["Laptop", <Svg><rect width="16" height="16" fill="#3c60a0" /><path d="M3.500 4.500h9v6h-9zM1.500 12.500h13" fill="none" stroke="#fff" strokeWidth="1.500" /><path d="M6 7.500h4" stroke="#fff" /></Svg>],
  ["Skype status", <SkypeIcon className="size-4" />],
  ["OneDrive status", <CloudIcon className="h-[11px] w-4" />],
  ["Updater", <Svg><rect x=".7" y=".7" width="14.600" height="14.600" fill="#3a0909" stroke="#c2241d" strokeWidth="1.400" /><path d="M3 12c3-1 6-5 5-9 0 4 2 6 5 7-3-1-7 0-10 2zM11 3l2 2" fill="none" stroke="#e9dede" strokeWidth="1.300" /></Svg>],
  ["Chrome apps", <ChromeIcon className="size-3.5" />],
  ["Upload", <Svg><circle cx="8" cy="8" r="7.500" fill="#e9552f" /><path d="M8 13V4M4 7.500L8 3.500l4 4" stroke="#fff" strokeWidth="2" fill="none" /></Svg>],
  ["Action center", <Svg><path d="M2 1v14" stroke="#fff" strokeWidth="1.600" /><path d="M3 2h6v2h6l-2 2 2 3H8V8H3z" fill="#fff" /></Svg>],
  ["Volume", <Svg><path d="M1 5h3l4-4v14l-4-4H1z" fill="#fff" /><path d="M10 5c1.500 2 1.500 4 0 6M12.500 3c2.500 3 2.500 7 0 10" stroke="#fff" fill="none" strokeWidth="1.200" /></Svg>],
  ["Battery", <Svg><path d="M8.500 2.500h6v12h-6zM10 1h3" fill="none" stroke="#fff" strokeWidth="1.600" /><path d="M10 5h3v8h-3z" fill="#fff" /><path d="M2 1v4M5 1v4M1 5h5v3H1zM3.500 8v7" stroke="#fff" fill="#fff" strokeWidth="1.300" /></Svg>],
  ["Network", <Svg><path d="M1.500 15v-2M4.500 15v-4M7.500 15V8.500M10.500 15V6M14 15V3" stroke="#fff" strokeWidth="2" /></Svg>],
];

const appState = {
  idle: "border-transparent",
  open: "border-[#8486bb] bg-[#57589a]",
  front: "border-[#e6e6f2] bg-[#8384b5]",
};

function Taskbar() {
  return (
    <footer className="flex h-10 items-center bg-[#2a2d7c]">
      <button aria-label="Start" className="flex w-[50px] justify-center"><StartIcon /></button>
      <div className="flex gap-1 pl-0.5">
        {apps.map((a) => (
          <button key={a.name} aria-label={a.name} className={`flex h-[38px] w-[58px] items-center justify-center border ${appState[a.state ?? "idle"]}`}>
            {a.icon}
          </button>
        ))}
      </div>
      <div className="ml-auto flex items-center gap-2 pt-0.5">
        {tray.map(([name, icon]) => (
          <button key={name} aria-label={name} className="flex size-4 items-center justify-center">{icon}</button>
        ))}
      </div>
      <div className="w-[86px] text-center font-['Roboto',sans-serif] text-[12px] leading-[17px] text-white">
        <div>6:55 PM</div>
        <div>2/25/2017</div>
      </div>
    </footer>
  );
}

export default function App() {
  return (
    <div className="flex min-h-screen flex-col bg-[#eee] font-['Open_Sans',sans-serif]">
      <TabStrip />
      <AddressBar />
      <BookmarksBar />
      <EditorBar />
      <main className="flex flex-1 flex-col items-center pl-0.5 pt-[50px]">
        <Device />
        <div className="mt-auto flex items-center self-end whitespace-nowrap pb-1.5 pr-[15px] font-['Lato',sans-serif] text-[8px] leading-3 text-[#777]">
          <span className="w-[74px]"><b>canvas:</b> 728/1024px</span>
          <span className="h-2 w-px bg-[#888]" />
          <span className="w-[81px] pl-5"><b>X:</b> 510 <b>Y:</b> -28</span>
          <span className="mr-2 h-2 w-px bg-[#888]" />
          <span className="w-[66px]"><b>W:</b> 322px, <b>H:</b> 122px</span>
        </div>
      </main>
      <Taskbar />
    </div>
  );
}
